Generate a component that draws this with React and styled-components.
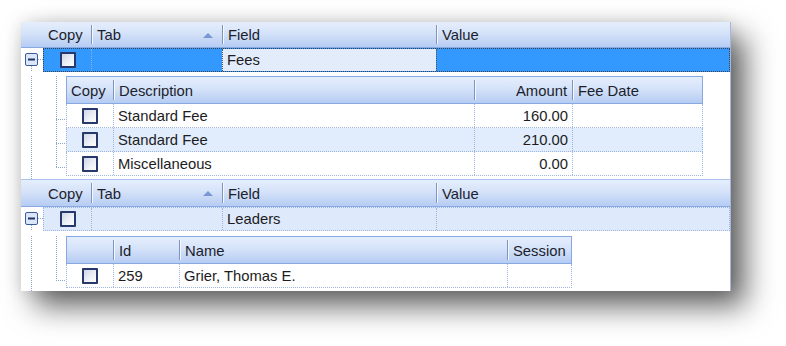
import React from 'react'
import styled, { createGlobalStyle } from 'styled-components'

const GlobalStyle = createGlobalStyle`
  html, body {
    margin: 0;
    background: #fff;
  }
  body {
    font-family: "Liberation Sans", Arial, sans-serif;
    font-size: 14.8px;
    color: #1c1c22;
  }
`

const headerBg = 'linear-gradient(to bottom, #e5eefc 0%, #d5e2f9 45%, #b5ccf3 100%)'
const gridLine = '#9fb5df'

const Page = styled.div`
  padding: 22px 55px 55px 21px;
  width: 786px;
  height: 346px;
  box-sizing: border-box;
`

const Panel = styled.div`
  width: 710px;
  height: 269px;
  box-sizing: border-box;
  background: #fff;
  overflow: hidden;
  border-right: 1px solid #a3b8dc;
  box-shadow: 0 0 16px rgba(0, 0, 0, 0.12), 14px 15px 28px rgba(0, 0, 0, 0.62);
`

const MasterHeader = styled.div`
  display: grid;
  grid-template-columns: 23px 47px 131px 214px 1fr;
  height: ${p => (p.$boxed ? 28 : 26)}px;
  box-sizing: border-box;
  background: ${headerBg};
  border-top: ${p => (p.$boxed ? '1px solid #a9c2ee' : 'none')};
  border-bottom: 1px solid #88a9e2;
`

const HeaderCell = styled.div`
  position: relative;
  display: flex;
  align-items: center;
  justify-content: ${p => (p.$right ? 'flex-end' : 'space-between')};
  padding: 1px 5px 0 ${p => (p.$sep ? 6 : 4)}px;
  color: #1b1e2c;
  white-space: nowrap;
  &::before {
    content: '';
    display: ${p => (p.$sep ? 'block' : 'none')};
    position: absolute;
    left: 0;
    top: 3px;
    bottom: 3px;
    width: 1px;
    background: #7f93bb;
    box-shadow: 1px 0 0 #f4f8ff;
  }
`

const SortArrow = styled.span`
  width: 0;
  height: 0;
  margin-right: 4px;
  border-left: 5px solid transparent;
  border-right: 5px solid transparent;
  border-bottom: 5px solid #7897d4;
`

const MasterRow = styled.div`
  display: grid;
  grid-template-columns: 22px 1fr;
  height: 24px;
`

const RowBody = styled.div`
  display: grid;
  grid-template-columns: 47px 131px 214px 1fr;
  box-sizing: border-box;
  border: 1px dotted ${p => (p.$selected ? '#3a3f4a' : gridLine)};
  background: ${p => (p.$selected ? '#3399ff' : '#dee9fb')};
`

const Cell = styled.div`
  display: flex;
  align-items: center;
  justify-content: ${p => (p.$center ? 'center' : p.$right ? 'flex-end' : 'flex-start')};
  padding: 0 4px;
  box-sizing: border-box;
  white-space: nowrap;
  overflow: hidden;
  border-left: ${p => (p.$sep ? `1px dotted ${p.$lineColor || gridLine}` : 'none')};
  background: ${p => (p.$focus ? '#e2ecfb' : 'transparent')};
`

const Detail = styled.div`
  display: flex;
  padding-top: ${p => p.$top}px;
  height: ${p => p.$height}px;
  box-sizing: border-box;
`

const Gutter = styled.svg`
  flex: 0 0 45px;
  height: 100%;
  display: block;
`

const ChildTable = styled.div`
  width: ${p => p.$width}px;
  flex: none;
`

const ChildHeader = styled.div`
  display: grid;
  grid-template-columns: ${p => p.$cols};
  height: 28px;
  box-sizing: border-box;
  border: 1px solid #88a8e2;
  background: ${headerBg};
`

const ChildRow = styled.div`
  display: grid;
  grid-template-columns: ${p => p.$cols};
  height: 24px;
  box-sizing: border-box;
  border: 1px dotted ${gridLine};
  border-top: none;
  background: ${p => (p.$alt ? '#e1ecfc' : '#fff')};
`

const Check = styled.span`
  width: 16px;
  height: 16px;
  box-sizing: border-box;
  border: 2px solid #26396a;
  border-radius: 1px;
  background: linear-gradient(135deg, #cfd7e6 0%, #eef2f8 60%, #fbfcfe 100%);
`

const dot = { stroke: '#8ea6d6', strokeWidth: 1, strokeDasharray: '1 1', shapeRendering: 'crispEdges' }

function Expander() {
  return (
    <svg width="22" height="24" style={{ display: 'block' }}>
      <line x1="10.5" y1="18" x2="10.5" y2="24" {...dot} />
      <line x1="17" y1="11.5" x2="22" y2="11.5" {...dot} />
      <rect x="4.5" y="5.5" width="12" height="12" rx="1.5" fill="#dbe6f8" stroke="#3d5a9c" />
      <rect x="7" y="10.5" width="7" height="2" fill="#1f3467" />
    </svg>
  )
}

function TreeGutter({ top, rows }) {
  const centers = rows.map((_, i) => top + 28 + i * 24 + 11.5)
  const last = centers[centers.length - 1]
  return (
    <Gutter>
      <line x1="10.5" y1="0" x2="10.5" y2="100%" {...dot} />
      <line x1="35.5" y1="0" x2="35.5" y2={last} {...dot} />
      {centers.map(c => (
        <line key={c} x1="35" y1={c} x2="45" y2={c} {...dot} />
      ))}
    </Gutter>
  )
}

function GroupHeader({ boxed }) {
  return (
    <MasterHeader $boxed={boxed}>
      <HeaderCell />
      <HeaderCell>Copy</HeaderCell>
      <HeaderCell $sep>
        Tab
        <SortArrow />
      </HeaderCell>
      <HeaderCell $sep>Field</HeaderCell>
      <HeaderCell $sep>Value</HeaderCell>
    </MasterHeader>
  )
}

function GroupRow({ field, selected }) {
  const line = selected ? '#7fb8f0' : gridLine
  return (
    <MasterRow>
      <Expander />
      <RowBody $selected={selected}>
        <Cell $center>
          <Check />
        </Cell>
        <Cell $sep $lineColor={line} />
        <Cell $sep $lineColor={selected ? '#555' : line} $focus={selected}>
          {field}
        </Cell>
        <Cell $sep $lineColor={selected ? '#555' : line} />
      </RowBody>
    </MasterRow>
  )
}

const fees = [
  { desc: 'Standard Fee', amount: '160.00' },
  { desc: 'Standard Fee', amount: '210.00' },
  { desc: 'Miscellaneous', amount: '0.00' },
]

const leaders = [{ id: '259', name: 'Grier, Thomas E.' }]

const feeCols = '46px 361px 98px 1fr'
const leaderCols = '46px 66px 328px 1fr'

export default function App() {
  return (
    <Page>
      <GlobalStyle />
      <Panel>
        <GroupHeader />
        <GroupRow field="Fees" selected />
        <Detail $top={4} $height={107}>
          <TreeGutter top={4} rows={fees} />
          <ChildTable $width={637}>
            <ChildHeader $cols={feeCols}>
              <HeaderCell>Copy</HeaderCell>
              <HeaderCell $sep>Description</HeaderCell>
              <HeaderCell $sep $right>Amount</HeaderCell>
              <HeaderCell $sep>Fee Date</HeaderCell>
            </ChildHeader>
            {fees.map((f, i) => (
              <ChildRow key={i} $cols={feeCols} $alt={i % 2 === 1}>
                <Cell $center>
                  <Check />
                </Cell>
                <Cell $sep>{f.desc}</Cell>
                <Cell $sep $right>{f.amount}</Cell>
                <Cell $sep />
              </ChildRow>
            ))}
          </ChildTable>
        </Detail>
        <GroupHeader boxed />
        <GroupRow field="Leaders" />
        <Detail $top={5} $height={60}>
          <TreeGutter top={5} rows={leaders} />
          <ChildTable $width={506}>
            <ChildHeader $cols={leaderCols}>
              <HeaderCell />
              <HeaderCell $sep>Id</HeaderCell>
              <HeaderCell $sep>Name</HeaderCell>
              <HeaderCell $sep>Session</HeaderCell>
            </ChildHeader>
            {leaders.map((l, i) => (
              <ChildRow key={i} $cols={leaderCols}>
                <Cell $center>
                  <Check />
                </Cell>
                <Cell $sep>{l.id}</Cell>
                <Cell $sep>{l.name}</Cell>
                <Cell $sep />
              </ChildRow>
            ))}
          </ChildTable>
        </Detail>
      </Panel>
    </Page>
  )
}
